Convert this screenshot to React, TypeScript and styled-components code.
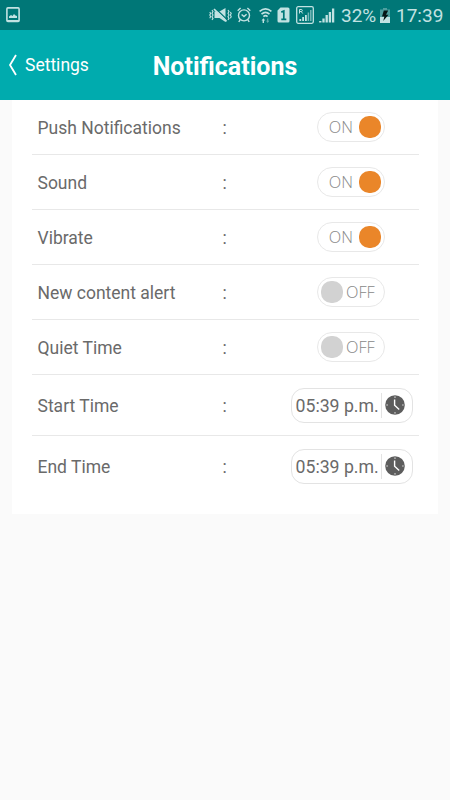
import React, { useState } from "react";
import styled, { createGlobalStyle } from "styled-components";

const GlobalStyle = createGlobalStyle`
  * { box-sizing: border-box; }
  body {
    margin: 0;
    background: #fafafa;
    font-family: Roboto, "Liberation Sans", sans-serif;
  }
`;

const Screen = styled.div`
  width: 450px;
  height: 800px;
  overflow: hidden;
  background: #fafafa;
`;

const StatusBar = styled.div`
  display: flex;
  justify-content: space-between;
  height: 30px;
  padding: 0 7px 0 6px;
  background: #007777;
  color: #c2e2e2;
`;

const StatusIcons = styled.div`
  display: flex;
  align-items: center;
  height: 30px;
`;

const Icon = styled.svg<{ $gap?: number }>`
  display: block;
  flex: none;
  margin-right: ${(p) => p.$gap ?? 0}px;
`;

const StatusText = styled.span<{ $width: number; $gap?: number }>`
  width: ${(p) => p.$width}px;
  margin-right: ${(p) => p.$gap ?? 0}px;
  padding-top: 1px;
  font-size: 19px;
  line-height: 30px;
  white-space: nowrap;
`;

const Header = styled.header`
  display: grid;
  grid-template-columns: 144px 162px 144px;
  align-items: center;
  height: 70px;
  background: #00abae;
  color: #fff;
`;

const BackButton = styled.button`
  display: flex;
  align-items: center;
  gap: 8px;
  padding: 0 0 0 8px;
  border: 0;
  background: none;
  color: inherit;
  font: 400 17.5px/24px Roboto, sans-serif;
`;

const Title = styled.h1`
  margin: 4px 0 0;
  font-size: 25px;
  line-height: 30px;
  font-weight: 700;
  text-align: center;
  white-space: nowrap;
`;

const Card = styled.main`
  height: 414px;
  margin: 0 12px;
  padding: 0 19px 0 20px;
  background: #fff;
`;

const Row = styled.div<{ $height: number; $last?: boolean }>`
  display: grid;
  grid-template-columns: 185px 1fr auto;
  align-items: center;
  height: ${(p) => p.$height}px;
  padding-left: 5.5px;
  border-bottom: 1px solid ${(p) => (p.$last ? "transparent" : "#e8e8e8")};
  color: #6a6a6a;
  font-size: 17.5px;
  line-height: 22px;
`;

const Label = styled.span`
  padding-top: 2px;
  white-space: nowrap;
`;

const Switch = styled.button<{ $on: boolean }>`
  display: flex;
  flex-direction: ${(p) => (p.$on ? "row" : "row-reverse")};
  align-items: center;
  justify-content: flex-end;
  gap: ${(p) => (p.$on ? 6 : 3)}px;
  width: 68px;
  height: 30px;
  margin-right: 34px;
  padding: 0 3px;
  border: 1px solid #e8e8e8;
  border-radius: 15px;
  background: #fff;
  color: #888;
  font: 300 16.3px/22px "Open Sans", sans-serif;
`;

const Knob = styled.span<{ $on: boolean }>`
  flex: none;
  width: 22px;
  height: 22px;
  border-radius: 10px;
  background: ${(p) => (p.$on ? "#ea8629" : "#d2d2d2")};
`;

const TimeField = styled.div`
  display: flex;
  align-items: center;
  width: 122px;
  height: 35px;
  margin-right: 6px;
  padding-left: 3.5px;
  border: 1px solid #e3e3e3;
  border-radius: 13px;
`;

const TimeValue = styled.span`
  width: 85.5px;
  padding-top: 2px;
  font-size: 17.7px;
  white-space: nowrap;
`;

const Divider = styled.span`
  width: 1px;
  height: 25px;
  margin-right: 3px;
  background: #e3e3e3;
`;

const ClockIcon = () => (
  <Icon width="20" height="20" viewBox="0 0 20 20">
    <circle cx="10" cy="10" r="9.8" fill="#5d5d5d" />
    <path d="M9.6 4.4v5.8l4.6 4.2" fill="none" stroke="#fff" strokeWidth="1.4" />
    <path d="M10 1.4v1.4M10 17.2v1.4M1.4 10h1.4M17.2 10h1.4" stroke="#eee" strokeWidth="1.2" />
  </Icon>
);

const switches = [
  { label: "Push Notifications", on: true },
  { label: "Sound", on: true },
  { label: "Vibrate", on: true },
  { label: "New content alert", on: false },
  { label: "Quiet Time", on: false },
];

const times = [
  { label: "Start Time", value: "05:39 p.m." },
  { label: "End Time", value: "05:39 p.m." },
];

const SwitchRow = ({ label, on }: { label: string; on: boolean }) => {
  const [active, setActive] = useState(on);
  return (
    <Row $height={55}>
      <Label>{label}</Label>
      <Label>:</Label>
      <Switch $on={active} role="switch" aria-checked={active} onClick={() => setActive(!active)}>
        <span>{active ? "ON" : "OFF"}</span>
        <Knob $on={active} />
      </Switch>
    </Row>
  );
};

export default function App() {
  return (
    <Screen>
      <GlobalStyle />
      <StatusBar>
        <StatusIcons>
          <Icon width="14" height="16" viewBox="0 0 14 16">
            <rect x=".9" y=".9" width="12.2" height="13.6" rx="1" fill="none" stroke="currentColor" strokeWidth="1.6" />
            <path d="M1 13h12v2H1zM3 11V9.5l2-1.5 1.5 1L8 7l1.5 1.5 1.5.5v2z" fill="currentColor" />
          </Icon>
        </StatusIcons>
        <StatusIcons>
          <Icon $gap={5} width="23" height="18" viewBox="0 0 23 18">
            <path d="M5.5 5.6h5L16.5 2v14l-6-4h-5z" fill="currentColor" />
            <path d="M6.4 2.6 18 13.4" stroke="#007777" strokeWidth="1.3" />
            <path d="M5 3 17.5 15.4" stroke="currentColor" strokeWidth="1.7" />
            <path d="m3 4 1 1.6L3 7.3 4 9l-1 1.7 1 1.7-1 1.5M.8 6l.8 1.5L.8 9l.8 1.5-.8 1.7M19 4l1 1.6-1 1.7L20 9l-1 1.7 1 1.7-1 1.5M21.4 6l.8 1.5-.8 1.5.8 1.5-.8 1.7" fill="none" stroke="currentColor" strokeWidth="1.1" />
          </Icon>
          <Icon $gap={8} width="14" height="16" viewBox="0 0 14 16">
            <g fill="none" stroke="currentColor" strokeWidth="1.4">
              <circle cx="7" cy="8.4" r="5.5" />
              <path d="M.7 3.8 3.6 1M13.3 3.8 10.4 1M3.2 12.6 1.8 15M10.8 12.6l1.4 2.4M4.6 7.4 7 9.6l2.6-2.4" />
            </g>
          </Icon>
          <Icon $gap={5} width="13" height="17" viewBox="0 0 13 17">
            <g fill="none" stroke="currentColor" strokeWidth="1.6">
              <path d="M.6 4.4q5.9-5.2 11.8 0M2.5 7.1q4-3.6 8 0M4.4 9.6q2.1-2 4.2 0" />
            </g>
            <path d="m4.4 11.2 1.8 2.3H5V16H3.6v-2.5H2.5z" fill="currentColor" />
            <path d="m8.7 16-1.6-2.3h1v-2.3h1.2v2.3h1z" fill="currentColor" opacity=".5" />
          </Icon>
          <Icon $gap={6} width="13" height="16" viewBox="0 0 13 16">
            <path d="M3.5.5H11a1.5 1.5 0 0 1 1.5 1.5v12a1.5 1.5 0 0 1-1.5 1.5H2A1.5 1.5 0 0 1 .5 14V3.5z" fill="currentColor" />
            <path d="M4.3 5.1 6.8 4v8.5M4.3 12.3h5" fill="none" stroke="#007777" strokeWidth="1.7" />
          </Icon>
          <Icon $gap={5} width="18" height="18" viewBox="0 0 18 18">
            <rect x=".7" y=".7" width="16.6" height="16.6" rx="1.5" fill="none" stroke="currentColor" strokeWidth="1.3" />
            <path d="M3.5 7.5v-4h1.7q1.2 0 1.2 1t-1.2 1H3.5m1.7 0 1.5 2" fill="none" stroke="currentColor" strokeWidth="1" />
            <path d="M4.3 15v-2M7.1 15v-4M9.9 15V9" stroke="currentColor" strokeWidth="1.8" />
            <path d="M12.4 15V6.5M14.8 15V4" stroke="currentColor" strokeWidth="1.5" opacity=".6" />
          </Icon>
          <Icon $gap={6} width="16" height="16" viewBox="0 0 16 16">
            <path d="M1.3 15.5V14M4.5 15.5v-4M7.7 15.5V8M10.9 15.5V5M14.1 15.5v-14" stroke="currentColor" strokeWidth="2.3" />
          </Icon>
          <StatusText $width={34} $gap={5}>32%</StatusText>
          <Icon $gap={6} width="10" height="17" viewBox="0 0 10 17">
            <path d="M0 2.5h3V1h4v1.5h3V16H0z" fill="#4d9f9f" />
            <path d="M0 10h10v6H0z" fill="currentColor" />
            <path d="M3.8 3.5 2 9.5h2.4L3.2 14l5.3-6.3H6L8.2 3.5z" fill="#061616" />
          </Icon>
          <StatusText $width={47}>17:39</StatusText>
        </StatusIcons>
      </StatusBar>
      <Header>
        <BackButton>
          <Icon width="9" height="22" viewBox="0 0 9 22">
            <path d="M8 1 2 11l6 10" fill="none" stroke="currentColor" strokeWidth="1.8" />
          </Icon>
          <span>Settings</span>
        </BackButton>
        <Title>Notifications</Title>
      </Header>
      <Card>
        {switches.map((s) => (
          <SwitchRow key={s.label} {...s} />
        ))}
        {times.map((t, i) => (
          <Row key={t.label} $height={61} $last={i === times.length - 1}>
            <Label>{t.label}</Label>
            <Label>:</Label>
            <TimeField>
              <TimeValue>{t.value}</TimeValue>
              <Divider />
              <ClockIcon />
            </TimeField>
          </Row>
        ))}
      </Card>
    </Screen>
  );
}
